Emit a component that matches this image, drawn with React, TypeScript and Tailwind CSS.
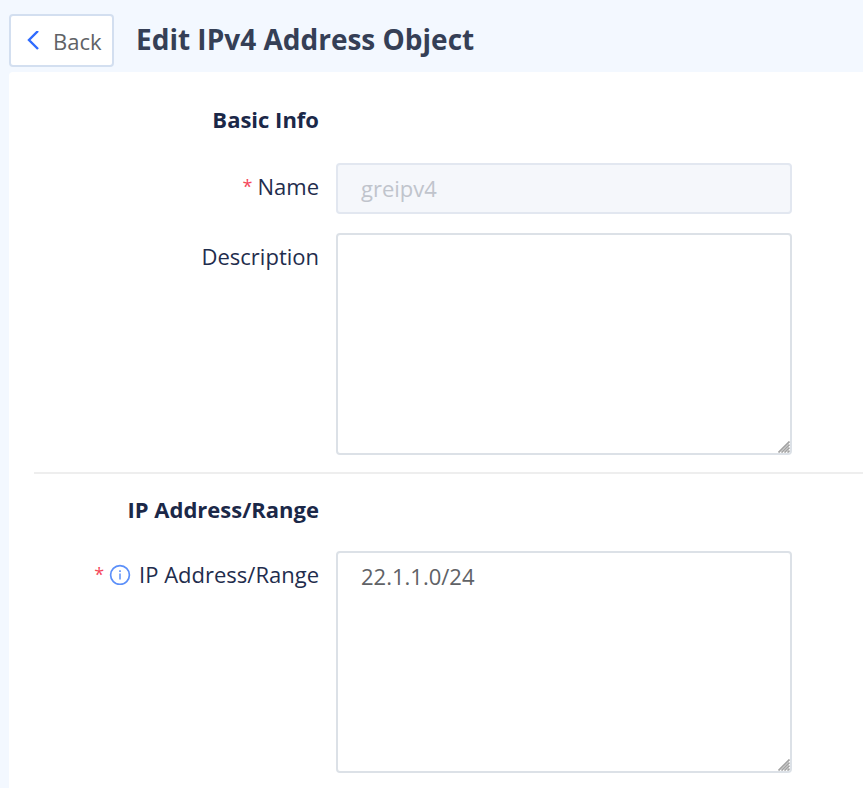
import React from 'react';

interface FormRowProps {
  id: string;
  label: string;
  required?: boolean;
  hint?: boolean;
  children: React.ReactNode;
}

interface TextAreaProps {
  id: string;
  defaultValue?: string;
}

const InfoIcon = () => (
  <svg className="w-[22px] h-[22px] shrink-0" viewBox="0 0 22 22" fill="none" stroke="#5b8ff9" aria-hidden="true">
    <circle cx="11" cy="12" r="9.4" strokeWidth="1.7" />
    <path d="M11 10.5V16.5" strokeWidth="1.5" />
    <path d="M11 7.3V9" strokeWidth="1.6" />
  </svg>
);

const ResizeGrip = () => (
  <svg
    className="absolute right-[2px] bottom-[2px] w-3 h-3 pointer-events-none"
    viewBox="0 0 12 12"
    stroke="#a3a3a3"
    strokeWidth="1.7"
    aria-hidden="true"
  >
    <path d="M0.5 11.5L11.5 0.5M3.5 11.5L11.5 3.5M6.5 11.5L11.5 6.5M9.5 11.5L11.5 9.5" />
  </svg>
);

const SectionTitle = ({ children }: { children: React.ReactNode }) => (
  <h2 className="w-[285px] text-right text-[22px] leading-[30px] font-bold text-[#1b2848]">{children}</h2>
);

const FormRow = ({ id, label, required, hint, children }: FormRowProps) => (
  <div className="flex items-start gap-[17px]">
    <label
      htmlFor={id}
      className="flex w-[285px] shrink-0 items-center justify-end pt-2 text-[22px] leading-[30px] text-[#1f2d4d]"
    >
      {required && <span className="mr-[5px] text-lg leading-[30px] text-[#f5475b]">*</span>}
      {hint && (
        <span className="mr-2">
          <InfoIcon />
        </span>
      )}
      {label}
    </label>
    <div className="relative flex max-w-[456px] flex-1">{children}</div>
  </div>
);

const TextArea = ({ id, defaultValue }: TextAreaProps) => (
  <>
    <textarea
      id={id}
      defaultValue={defaultValue}
      className="h-[222px] w-full resize-none rounded-sm border-2 border-[#dce1e7] bg-white px-[23px] py-2 text-[22px] leading-[30px] text-[#606266] outline-none"
    />
    <ResizeGrip />
  </>
);

const App = () => {
  return (
    <div className="min-h-screen flex flex-col bg-[#f3f8ff] font-['Open_Sans','Noto_Sans',sans-serif]">
      <header className="flex h-[72px] items-center gap-[22px] px-[9px] pt-2">
        <button
          type="button"
          className="flex h-[53px] w-[105px] items-center gap-[14px] rounded-sm border-2 border-[#d3dff0] bg-white pt-[2px] pl-4 text-[22px] text-[#606266]"
        >
          <svg className="w-3 h-5 shrink-0" viewBox="0 0 12 20" fill="none" stroke="#2f6bff" strokeWidth="2.4" aria-hidden="true">
            <path d="M11 0L2 9L11 18" />
          </svg>
          Back
        </button>
        <h1 className="pb-[2px] text-[28px] leading-9 font-bold text-[#353f56]">Edit IPv4 Address Object</h1>
      </header>

      <main className="ml-[9px] flex-1 rounded-tl-sm bg-white pl-[25px] pt-8">
        <section>
          <SectionTitle>Basic Info</SectionTitle>
          <div className="mt-[29px] flex flex-col gap-[19px]">
            <FormRow id="name" label="Name" required>
              <input
                id="name"
                type="text"
                disabled
                defaultValue="greipv4"
                className="h-[51px] w-full rounded-sm border-2 border-[#e2e7f0] bg-[#f5f7fb] px-[23px] pb-[2px] text-[22px] text-[#c0c4cc]"
              />
            </FormRow>
            <FormRow id="description" label="Description">
              <TextArea id="description" />
            </FormRow>
          </div>
        </section>

        <hr className="mt-[17px] border-t-2 border-[#eeeeee]" />

        <section className="pt-5">
          <SectionTitle>IP Address/Range</SectionTitle>
          <div className="mt-[27px]">
            <FormRow id="range" label="IP Address/Range" required hint>
              <TextArea id="range" defaultValue="22.1.1.0/24" />
            </FormRow>
          </div>
        </section>
      </main>
    </div>
  );
};

export default App;
